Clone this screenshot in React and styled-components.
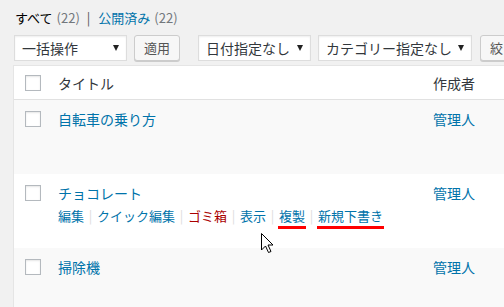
import React from "react";
import styled, { createGlobalStyle } from "styled-components";

const GlobalStyle = createGlobalStyle`
  html, body { margin: 0; padding: 0; background: #f1f1f1; overflow: hidden; }
  body { font-family: "Noto Sans CJK JP", "Liberation Sans", sans-serif; color: #32373c; }
  * { box-sizing: border-box; }
`;

const Page = styled.div`
  position: relative;
  width: 504px;
  height: 307px;
  overflow: hidden;
`;

const StatusList = styled.ul`
  display: flex;
  align-items: center;
  height: 35px;
  margin: 0;
  padding: 0 0 0 15px;
  list-style: none;
  font-size: 13px;
  line-height: 20px;
  white-space: nowrap;
`;

const StatusItem = styled.li`
  color: ${(p) => (p.$current ? "#000" : "#0073aa")};
`;

const Count = styled.span`
  color: #72777c;
  margin-left: 4px;
`;

const StatusSep = styled.span`
  color: #555;
  margin: 0 8px 0 7px;
`;

const Toolbar = styled.div`
  display: flex;
  align-items: flex-start;
  gap: 7px;
  height: 30px;
  padding-left: 14px;
  white-space: nowrap;
`;

const FakeSelect = styled.div`
  flex: none;
  display: flex;
  align-items: center;
  justify-content: space-between;
  width: ${(p) => p.$w}px;
  height: 26px;
  margin-left: ${(p) => p.$ml || 0}px;
  padding: 0 7px 0 7px;
  border: 1px solid #ddd;
  background: #fff;
  box-shadow: inset 0 1px 2px rgba(0, 0, 0, 0.07);
  font-size: 14px;
  color: #32373c;
`;

const Caret = styled.span`
  width: 0;
  height: 0;
  border-left: 3px solid transparent;
  border-right: 3px solid transparent;
  border-top: 6px solid #222;
`;

const Button = styled.button`
  flex: none;
  height: 26px;
  margin-left: ${(p) => p.$ml || 0}px;
  padding: 0 ${(p) => p.$px || 9}px;
  border: 1px solid #ccc;
  border-radius: 3px;
  background: #f7f7f7;
  box-shadow: 0 1px 0 #ccc;
  font-family: inherit;
  font-size: 13px;
  line-height: 24px;
  color: #555;
  white-space: nowrap;
`;

const Table = styled.div`
  width: 540px;
  margin-left: 13px;
  border: 1px solid #e5e5e5;
  background: #fff;
`;

const HeaderRow = styled.div`
  display: grid;
  grid-template-columns: 44px 375px 1fr;
  align-items: center;
  height: 34px;
  border-bottom: 1px solid #e1e1e1;
  font-size: 14px;
  color: #32373c;
`;

const Row = styled.div`
  display: grid;
  grid-template-columns: 44px 375px 1fr;
  align-items: start;
  padding: 8px 0 22px;
  background: ${(p) => (p.$alt ? "#f9f9f9" : "#fff")};
`;

const CheckCell = styled.div`
  padding-left: 11px;
  padding-top: ${(p) => (p.$header ? 0 : 3)}px;
  display: flex;
`;

const Checkbox = styled.span`
  display: block;
  width: 16px;
  height: 16px;
  border: 1px solid #b4b9be;
  background: #fff;
  box-shadow: inset 0 1px 2px rgba(0, 0, 0, 0.1);
`;

const TitleCell = styled.div`
  display: flex;
  flex-direction: column;
`;

const TitleLink = styled.a`
  font-size: 14px;
  line-height: 22px;
  color: #0073aa;
  text-decoration: none;
`;

const Actions = styled.div`
  display: flex;
  align-items: flex-start;
  margin-top: 2px;
  font-size: 13px;
  line-height: 20px;
  height: 20px;
  color: #ddd;
  white-space: nowrap;
  visibility: ${(p) => (p.$shown ? "visible" : "hidden")};
`;

const Action = styled.span`
  position: relative;
  display: inline-block;
  line-height: 20px;
  color: ${(p) => (p.$danger ? "#a00" : "#0073aa")};
  &::after {
    content: "";
    display: ${(p) => (p.$marked ? "block" : "none")};
    position: absolute;
    left: -1px;
    right: -1px;
    top: 20px;
    height: 3px;
    background: #ff0000;
  }
`;

const ActionSep = styled.span`
  display: inline-block;
  width: 13px;
  text-align: center;
  color: #ddd;
`;

const AuthorLink = styled.a`
  font-size: 14px;
  line-height: 22px;
  color: #0073aa;
  text-decoration: none;
`;

const Cursor = styled.svg`
  position: absolute;
  left: 260px;
  top: 232px;
  width: 14px;
  height: 22px;
  overflow: visible;
`;

const posts = [
  { title: "自転車の乗り方", alt: true },
  { title: "チョコレート", alt: false, actions: true },
  { title: "掃除機", alt: true },
];

const actionList = [
  { label: "編集" },
  { label: "クイック編集" },
  { label: "ゴミ箱", danger: true },
  { label: "表示" },
  { label: "複製", marked: true },
  { label: "新規下書き", marked: true },
];

export default function App() {
  return (
    <Page>
      <GlobalStyle />
      <StatusList>
        <StatusItem $current>
          すべて<Count>(22)</Count>
          <StatusSep>|</StatusSep>
        </StatusItem>
        <StatusItem>
          公開済み<Count>(22)</Count>
        </StatusItem>
      </StatusList>

      <Toolbar>
        <FakeSelect $w={113}>
          一括操作<Caret />
        </FakeSelect>
        <Button>適用</Button>
        <FakeSelect $w={113} $ml={11}>
          日付指定なし<Caret />
        </FakeSelect>
        <FakeSelect $w={154}>
          カテゴリー指定なし<Caret />
        </FakeSelect>
        <Button $ml={1}>絞り込み検索</Button>
      </Toolbar>

      <Table>
        <HeaderRow>
          <CheckCell $header>
            <Checkbox />
          </CheckCell>
          <span>タイトル</span>
          <span>作成者</span>
        </HeaderRow>
        {posts.map((p) => (
          <Row key={p.title} $alt={p.alt}>
            <CheckCell>
              <Checkbox />
            </CheckCell>
            <TitleCell>
              <TitleLink href="#">{p.title}</TitleLink>
              <Actions $shown={!!p.actions}>
                {actionList.map((a, i) => (
                  <React.Fragment key={a.label}>
                    {i > 0 && <ActionSep>|</ActionSep>}
                    <Action $danger={a.danger} $marked={a.marked}>
                      {a.label}
                    </Action>
                  </React.Fragment>
                ))}
              </Actions>
            </TitleCell>
            <AuthorLink href="#">管理人</AuthorLink>
          </Row>
        ))}
      </Table>

      <Cursor viewBox="0 0 14 22">
        <path
          d="M1.5 1.5 L1.5 18 L5.5 14 L8.5 20.5 L11 19.5 L8 13 L13 13 Z"
          fill="#fff"
          stroke="#000"
          strokeWidth="1"
          strokeLinejoin="miter"
        />
      </Cursor>
    </Page>
  );
}
